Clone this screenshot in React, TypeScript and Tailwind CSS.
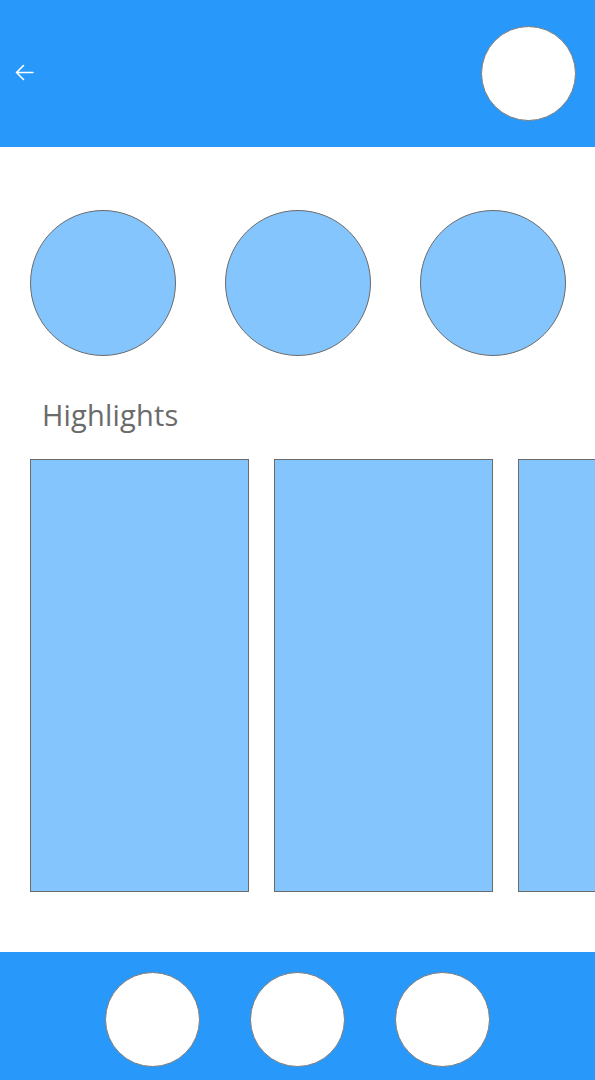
export default function App() {
  const circles = [0, 1, 2];
  const cards = [0, 1, 2];

  return (
    <div className="w-[595px] h-[1080px] bg-white flex flex-col overflow-hidden font-['Open_Sans',sans-serif]">
      {/* Header */}
      <header className="h-[147px] shrink-0 bg-[#2899fa] flex items-center justify-between pl-[15px] pr-[19px]">
        <svg width="19" height="17" viewBox="0 0 19 17" fill="none" className="mt-[-2px]">
          <path d="M18 8.5H2M8.5 1.5L1.5 8.5L8.5 15.5" stroke="white" strokeWidth="1.6" strokeLinecap="round" strokeLinejoin="round" />
        </svg>
        <div className="w-[95px] h-[95px] rounded-full bg-white border border-[#7a7a7a]" />
      </header>

      {/* Stories */}
      <div className="flex gap-[49px] pl-[30px] pt-[63px]">
        {circles.map((i) => (
          <div key={i} className="w-[146px] h-[146px] shrink-0 rounded-full bg-[#84c5fe] border border-[#6b6b6b]" />
        ))}
      </div>

      <h2 className="pl-[42px] mt-[42px] text-[29px] leading-[34px] tracking-[0.2px] text-[#6b6b6b] font-normal">Highlights</h2>

      {/* Highlight cards */}
      <div className="flex gap-[25px] pl-[30px] mt-[27px] overflow-hidden">
        {cards.map((i) => (
          <div key={i} className="w-[219px] h-[433px] shrink-0 bg-[#84c5fe] border border-[#6b6b6b]" />
        ))}
      </div>

      {/* Bottom bar */}
      <footer className="mt-auto h-[128px] shrink-0 bg-[#2899fa] flex items-start justify-center gap-[50px] pt-[20px]">
        {circles.map((i) => (
          <div key={i} className="w-[95px] h-[95px] rounded-full bg-white border border-[#7a7a7a]" />
        ))}
      </footer>
    </div>
  );
}
